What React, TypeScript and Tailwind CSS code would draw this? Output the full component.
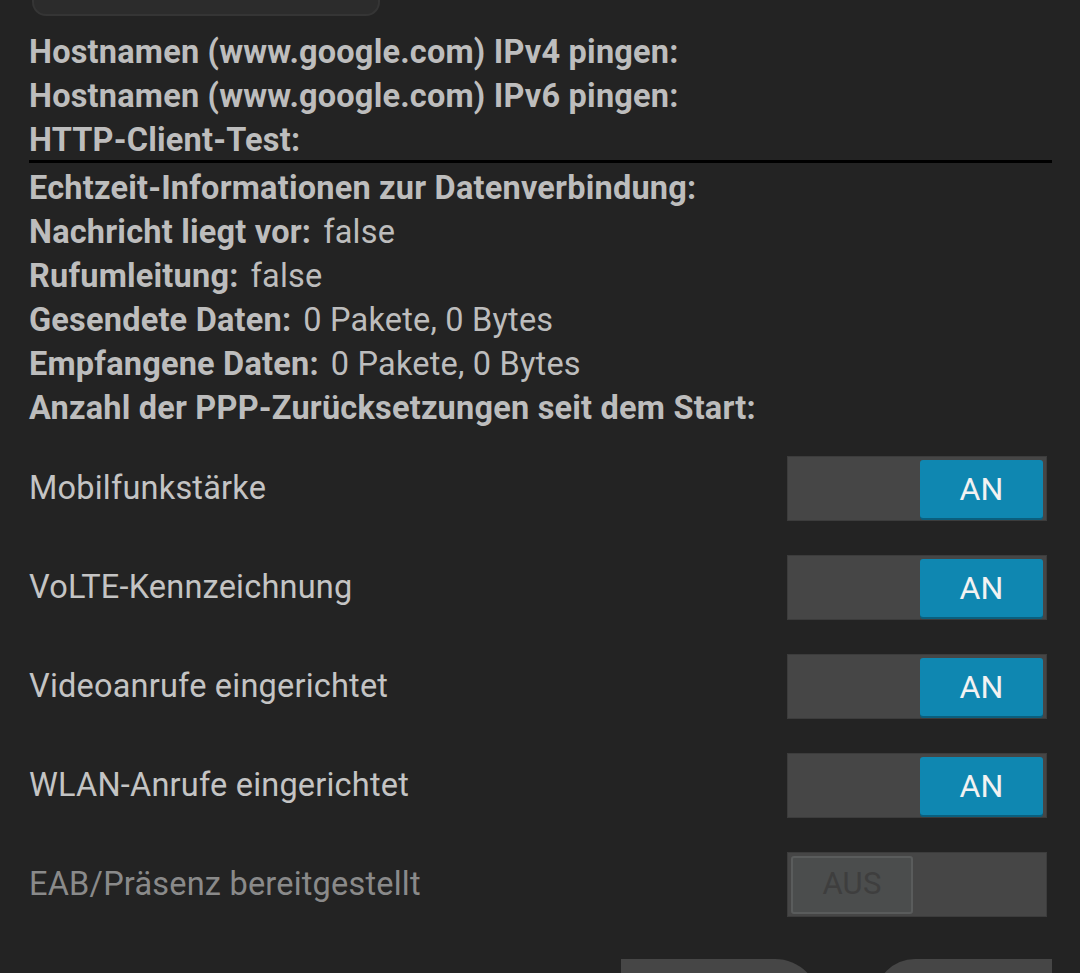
import React from 'react';

const infoTop = [
  'Hostnamen (www.google.com) IPv4 pingen:',
  'Hostnamen (www.google.com) IPv6 pingen:',
  'HTTP-Client-Test:',
];

const infoBottom: { label: string; value?: string }[] = [
  { label: 'Echtzeit-Informationen zur Datenverbindung:' },
  { label: 'Nachricht liegt vor:', value: 'false' },
  { label: 'Rufumleitung:', value: 'false' },
  { label: 'Gesendete Daten:', value: '0 Pakete, 0 Bytes' },
  { label: 'Empfangene Daten:', value: '0 Pakete, 0 Bytes' },
  { label: 'Anzahl der PPP-Zurücksetzungen seit dem Start:' },
];

const toggles = [
  { label: 'Mobilfunkstärke', on: true, disabled: false },
  { label: 'VoLTE-Kennzeichnung', on: true, disabled: false },
  { label: 'Videoanrufe eingerichtet', on: true, disabled: false },
  { label: 'WLAN-Anrufe eingerichtet', on: true, disabled: false },
  { label: 'EAB/Präsenz bereitgestellt', on: false, disabled: true },
];

const Toggle = ({ on, disabled }: { on: boolean; disabled: boolean }) => (
  <div
    className={`w-[260px] h-[65px] bg-[#464646] border border-[#3c3c3c] flex items-center px-[3px] ${
      on ? 'justify-end' : 'justify-start'
    }`}
  >
    {on ? (
      <div className="w-[123px] h-[58px] rounded-[3px] bg-[#0f87b1] shadow-[0_2px_0_#0a5f7e] flex items-center justify-center text-[32px] text-[#f2f2f2]">
        AN
      </div>
    ) : (
      <div
        className={`w-[122px] h-[58px] rounded-[3px] bg-[#4b4d4d] border-2 border-[#5a5c5c] flex items-center justify-center text-[31px] ${
          disabled ? 'text-[#3e3e3e]' : 'text-white'
        }`}
      >
        AUS
      </div>
    )}
  </div>
);

const App = () => {
  return (
    <div
      className="w-[1080px] h-[973px] overflow-hidden bg-[#232323] text-[#bdbdbd] tracking-[0.2px]"
      style={{ fontFamily: 'Roboto, "Noto Sans", sans-serif' }}
    >
      {/* button cut off at top */}
      <div className="ml-[32px] w-[348px] h-[60px] -mt-[44px] rounded-[14px] bg-[#2c2c2c] border-2 border-[#353535]" />

      <div className="pl-[29px] pr-[28px] mt-[14px]">
        {infoTop.map((t) => (
          <p key={t} className="text-[32.5px] leading-[44px] font-bold whitespace-nowrap">
            {t}
          </p>
        ))}
        <div className="h-[3px] bg-black -mt-[2px]" />
        <div className="mt-[3px]">
          {infoBottom.map((r) => (
            <p key={r.label} className="text-[32.5px] leading-[44px] whitespace-nowrap">
              <span className="font-bold">{r.label}</span>
              {r.value && <span className="ml-[12px]">{r.value}</span>}
            </p>
          ))}
        </div>

        <div className="mt-[9px] pr-[5px]">
          {toggles.map((t) => (
            <div key={t.label} className="h-[99px] flex items-center justify-between">
              <span className={`text-[32.5px] ${t.disabled ? 'text-[#8a8a8a]' : 'text-[#c4c4c4]'}`}>
                {t.label}
              </span>
              <Toggle on={t.on} disabled={t.disabled} />
            </div>
          ))}
        </div>

        <div className="mt-[25px] flex justify-end gap-[55px]">
          <div className="w-[199px] h-[60px] bg-[#464646] rounded-tr-[45px]" />
          <div className="w-[177px] h-[60px] bg-[#464646] rounded-tl-[40px]" />
        </div>
      </div>
    </div>
  );
};

export default App;
